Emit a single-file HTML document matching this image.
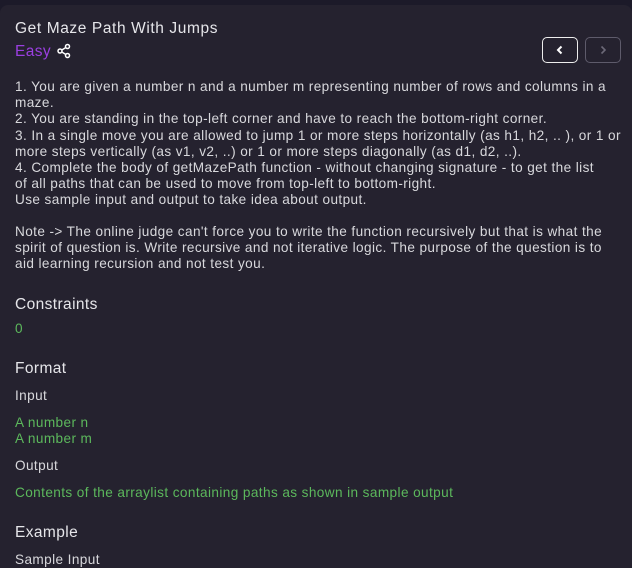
<!DOCTYPE html>
<html><head><style>
html,body{margin:0;width:632px;height:568px;overflow:hidden;}
body{background:#1c1a29;font-family:"Liberation Sans",sans-serif;position:relative;}
.card{position:absolute;left:0;top:5px;width:632px;height:563px;background:#25222f;border-radius:8px 8px 0 0;}
.t{position:absolute;left:15px;white-space:nowrap;color:#e6e6ea;}
.p{font-size:13.6px;color:#d8d8dc;letter-spacing:0.4px;}
.g{color:#5cb85c;}
.hd{font-size:15.5px;letter-spacing:0.4px;}
.btn{position:absolute;top:37px;width:34px;height:24px;border-radius:5px;}
</style></head><body>
<div class="card"></div>
<div class="t" style="top:20px;font-size:15.5px;letter-spacing:0.6px">Get Maze Path With Jumps</div>
<div class="t" style="top:43px;font-size:15.5px;color:#9a3fe0;letter-spacing:0.4px">Easy</div>
<svg style="position:absolute;left:56px;top:43px" width="16" height="16" viewBox="0 0 16 16" fill="none" stroke="#fff" stroke-width="1.5"><circle cx="11.5" cy="3.5" r="2"/><circle cx="4" cy="8" r="2"/><circle cx="11.5" cy="12.5" r="2"/><path d="M5.8 7L9.7 4.6M5.8 9L9.7 11.4"/></svg>
<div class="btn" style="left:542px;border:1.5px solid #eee"></div>
<svg style="position:absolute;left:554px;top:44px" width="12" height="12" viewBox="0 0 12 12" fill="none" stroke="#fff" stroke-width="2"><path d="M7.5 2.5L4 6l3.5 3.5"/></svg>
<div class="btn" style="left:585px;border:1.5px solid #5e5b6b"></div>
<svg style="position:absolute;left:597px;top:44px" width="12" height="12" viewBox="0 0 12 12" fill="none" stroke="#6c6978" stroke-width="1.6"><path d="M4.5 2.5L8 6l-3.5 3.5"/></svg>
<div class="t p" style="top:79px;line-height:16.2px">1. You are given a number n and a number m representing number of rows and columns in a<br>maze.<br>2. You are standing in the top-left corner and have to reach the bottom-right corner.<br>3. In a single move you are allowed to jump 1 or more steps horizontally (as h1, h2, .. ), or 1 or<br>more steps vertically (as v1, v2, ..) or 1 or more steps diagonally (as d1, d2, ..).<br>4. Complete the body of getMazePath function - without changing signature - to get the list<br>of all paths that can be used to move from top-left to bottom-right.<br>Use sample input and output to take idea about output.</div>
<div class="t p" style="top:224px;line-height:16.2px">Note -&gt; The online judge can't force you to write the function recursively but that is what the<br>spirit of question is. Write recursive and not iterative logic. The purpose of the question is to<br>aid learning recursion and not test you.</div>
<div class="t hd" style="top:296px">Constraints</div>
<div class="t p g" style="top:321px">0</div>
<div class="t hd" style="top:360px">Format</div>
<div class="t p" style="top:388px">Input</div>
<div class="t p g" style="top:415px;line-height:16px">A number n<br>A number m</div>
<div class="t p" style="top:458px">Output</div>
<div class="t p g" style="top:485px">Contents of the arraylist containing paths as shown in sample output</div>
<div class="t hd" style="top:524px">Example</div>
<div class="t p" style="top:552px">Sample Input</div>
</body></html>
